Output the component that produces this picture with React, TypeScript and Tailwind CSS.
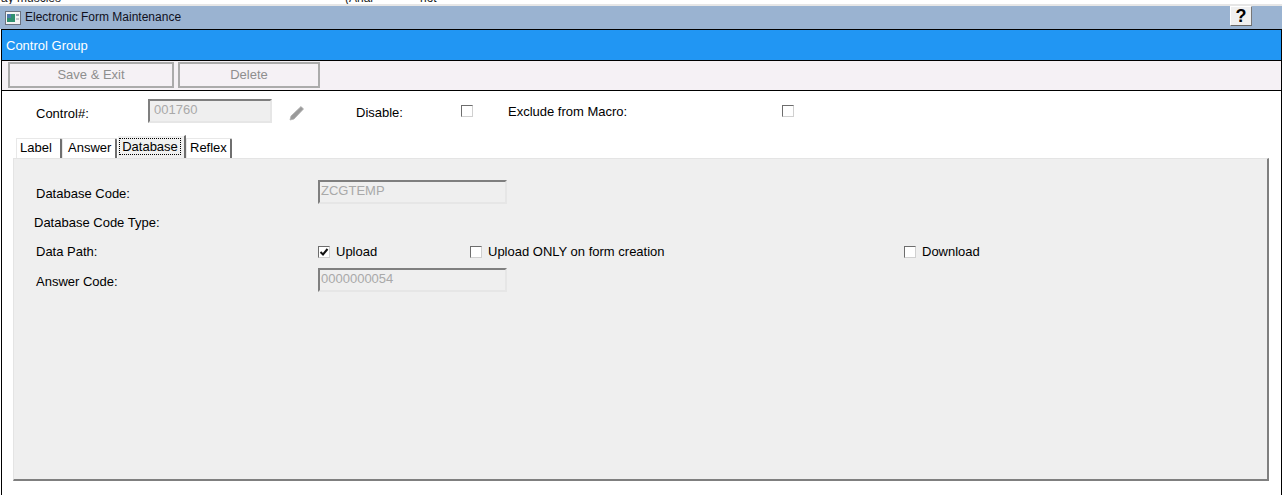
const font = "font-['Liberation_Sans',Arial,sans-serif]";

function SunkenInput({ value, className }: { value: string; className: string }) {
  return (
    <div
      className={`h-[24px] border-2 border-t-[#7f7f7f] border-l-[#7f7f7f] border-r-[#e6e6e6] border-b-[#e6e6e6] bg-[#efefef] text-[13px] leading-[18px] text-[#a9a9a9] ${className}`}
    >
      {value}
    </div>
  );
}

function Check({ checked }: { checked?: boolean }) {
  return (
    <span className="flex h-[12px] w-[12px] shrink-0 items-center justify-center border border-t-[#6d6d6d] border-l-[#6d6d6d] border-r-[#d0d0d0] border-b-[#d0d0d0] bg-white">
      {checked && (
        <svg width="10" height="10" viewBox="0 0 10 10">
          <path d="M1.5 5 L4 7.5 L8.5 2" fill="none" stroke="#111" strokeWidth="2" />
        </svg>
      )}
    </span>
  );
}

function Tab({ label, active, className }: { label: string; active?: boolean; className: string }) {
  if (active) {
    return (
      <div className={`-mt-[2px] h-[23px] border-t border-l border-t-white border-l-white border-r-2 border-r-[#6f6f6f] bg-[#f0f0f0] pt-[2px] pr-[3px] pl-[1px] ${className}`}>
        <span className="block border border-dotted border-black text-center text-[13px] leading-[15px] text-black">{label}</span>
      </div>
    );
  }
  return (
    <div className={`h-[20px] rounded-tr-[2px] border-t border-l border-t-[#e8e8e8] border-l-[#e8e8e8] border-r-2 border-r-[#6f6f6f] bg-white text-[13px] leading-[18px] text-black ${className}`}>
      {label}
    </div>
  );
}

export default function App() {
  return (
    <div className={`${font} h-[495px] w-[1282px] overflow-hidden bg-white`}>
      {/* bit of the window behind */}
      <div className="h-[6px] overflow-hidden border-b-2 border-b-[#e6e6e6] pl-[1px]">
        <div className="-mt-[9px] flex text-[12px] leading-[14px] text-[#222]">
          <span className="w-[344px]">ay muscles</span>
          <span className="w-[75px]">(Arial</span>
          <span>not</span>
        </div>
      </div>

      {/* title bar */}
      <div className="flex h-[23px] items-center bg-[#9ab3d1]">
        <svg className="ml-[5px]" width="16" height="14" viewBox="0 0 16 14">
          <rect x="0.5" y="0.5" width="15" height="13" fill="#f4f4f4" stroke="#6b7280" />
          <rect x="2" y="3" width="8" height="8" fill="#2f8f6f" />
          <rect x="2" y="3" width="4" height="4" fill="#4a78a8" />
          <rect x="11" y="3" width="3" height="2" fill="#9aa3ad" />
          <rect x="11" y="7" width="3" height="2" fill="#c3c8cd" />
        </svg>
        <span className="mb-[2px] ml-[4px] text-[12px] leading-none text-[#10101c]">Electronic Form Maintenance</span>
        <div className="mr-[30px] mb-[3px] ml-auto flex h-[20px] w-[22px] items-center justify-center border border-t-white border-l-white border-r-[#777] border-b-[#666] bg-[#f0f0f0] text-[18px] leading-none font-bold text-black">
          ?
        </div>
      </div>

      {/* app window */}
      <div className="ml-[1px] h-[466px] border-x border-t border-black">
        <div className="flex h-[31px] items-center border-b border-black bg-[#2196f3] pt-[1px] pl-[4px] text-[13px] text-white">
          Control Group
        </div>
        <div className="flex h-[30px] gap-[4px] border-b border-black bg-[#f5f1f5] pt-[1px] pl-[6px]">
          <div className="flex h-[26px] w-[166px] items-center justify-center border-2 border-[#ababab] text-[13px] text-[#8e8e8e]">
            Save &amp; Exit
          </div>
          <div className="flex h-[26px] w-[142px] items-center justify-center border-2 border-[#ababab] text-[13px] text-[#8e8e8e]">
            Delete
          </div>
        </div>

        <div className="relative h-[404px]">
          <div className="flex h-[40px] items-start pt-[8px] text-[13px] leading-[14px] text-black">
            <span className="mt-[8px] ml-[34px] w-[112px]">Control#:</span>
            <SunkenInput value="001760" className="w-[124px] pl-[4px]" />
            <svg className="mt-[6px] ml-[17px]" width="16" height="16" viewBox="0 0 16 16">
              <path d="M1 15 L2 11 L12 1.5 L14.5 4 L5 14 Z" fill="#9a9a9a" stroke="#b0b0b0" strokeWidth="0.8" />
            </svg>
            <span className="mt-[7px] ml-[51px] w-[105px]">Disable:</span>
            <span className="mt-[6px]"><Check /></span>
            <span className="mt-[6px] ml-[35px] w-[274px]">Exclude from Macro:</span>
            <span className="mt-[6px]"><Check /></span>
          </div>

          <div className="flex h-[27px] items-end pl-[14px]">
            <Tab label="Label" className="w-[46px] pl-[3px]" />
            <Tab label="Answer" className="w-[55px] pl-[5px]" />
            <Tab label="Database" active className="w-[69px]" />
            <Tab label="Reflex" className="w-[46px] pl-[3px]" />
          </div>

          <div className="ml-[11px] h-[323px] w-[1256px] border-t border-l border-t-[#e4e4e4] border-l-[#e4e4e4] border-r-2 border-b-2 border-r-[#7f7f7f] border-b-[#7f7f7f] bg-[#efefef] pt-[21px] text-[13px] text-black">
            <div className="flex h-[24px] items-center">
              <span className="mt-[4px] ml-[22px] w-[282px]">Database Code:</span>
              <SunkenInput value="ZCGTEMP" className="w-[189px] pl-[1px]" />
            </div>
            <div className="mt-[12px] ml-[20px] h-[14px] leading-[14px]">Database Code Type:</div>
            <div className="mt-[15px] flex h-[14px] items-center leading-[14px]">
              <span className="ml-[22px] w-[282px]">Data Path:</span>
              <Check checked />
              <span className="ml-[6px] w-[134px]">Upload</span>
              <Check />
              <span className="ml-[6px] w-[416px]">Upload ONLY on form creation</span>
              <Check />
              <span className="ml-[6px]">Download</span>
            </div>
            <div className="mt-[9px] flex h-[24px] items-center">
              <span className="mt-[4px] ml-[22px] w-[282px]">Answer Code:</span>
              <SunkenInput value="0000000054" className="w-[189px] pl-[1px]" />
            </div>
          </div>
        </div>
      </div>
    </div>
  );
}
